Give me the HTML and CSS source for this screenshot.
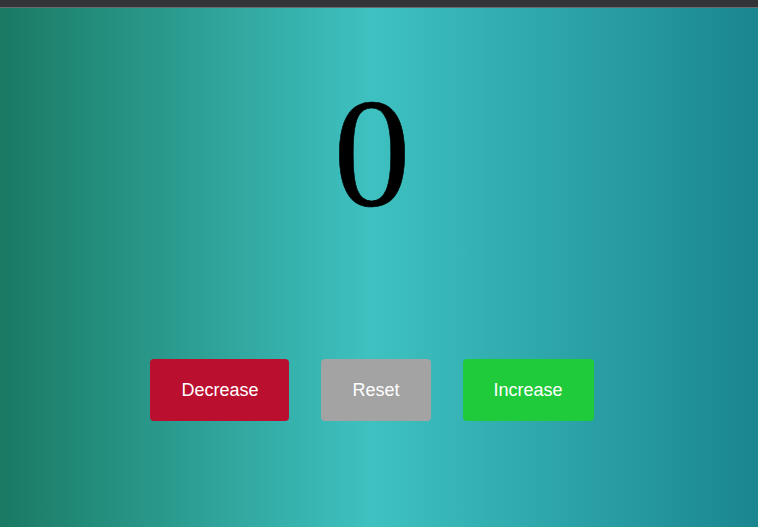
FILE: index.html
```html
<!DOCTYPE html>
<html>
<head>
<meta charset="utf-8">
<link rel="stylesheet" href="styles.css">
</head>
<body>
<div class="topbar"></div>
<main class="counter">
  <div class="value">0</div>
  <div class="buttons">
    <button class="btn btn-decrease">Decrease</button>
    <button class="btn btn-reset">Reset</button>
    <button class="btn btn-increase">Increase</button>
  </div>
</main>
</body>
</html>
```
FILE: styles.css
```css
html, body {
  margin: 0;
  padding: 0;
  height: 100%;
}
body {
  display: flex;
  flex-direction: column;
  background: linear-gradient(to right, #1a7a63 0%, #3ec1c1 49%, #1a8690 100%);
  font-family: "Liberation Sans", Arial, sans-serif;
  overflow: hidden;
}
.topbar {
  height: 7px;
  background: #333438;
  border-bottom: 1px solid #6a6b6e;
  flex: none;
}
.counter {
  flex: 1;
  display: flex;
  flex-direction: column;
  align-items: center;
  padding-top: 54px;
  padding-right: 14px;
}
.value {
  font-family: "Liberation Serif", "Times New Roman", serif;
  font-size: 154px;
  line-height: 183px;
  color: #000;
  -webkit-text-stroke: 0.6px #000;
}
.buttons {
  display: flex;
  gap: 32px;
  margin-top: 114px;
}
.btn {
  font-family: "Liberation Sans", Arial, sans-serif;
  font-size: 18px;
  line-height: 22px;
  padding: 20px 31px;
  border: none;
  border-radius: 4px;
  color: #fff;
  cursor: pointer;
}
.btn-decrease { background: #bb0f2f; }
.btn-reset { background: #a3a3a3; }
.btn-increase { background: #20cb3b; }
```
